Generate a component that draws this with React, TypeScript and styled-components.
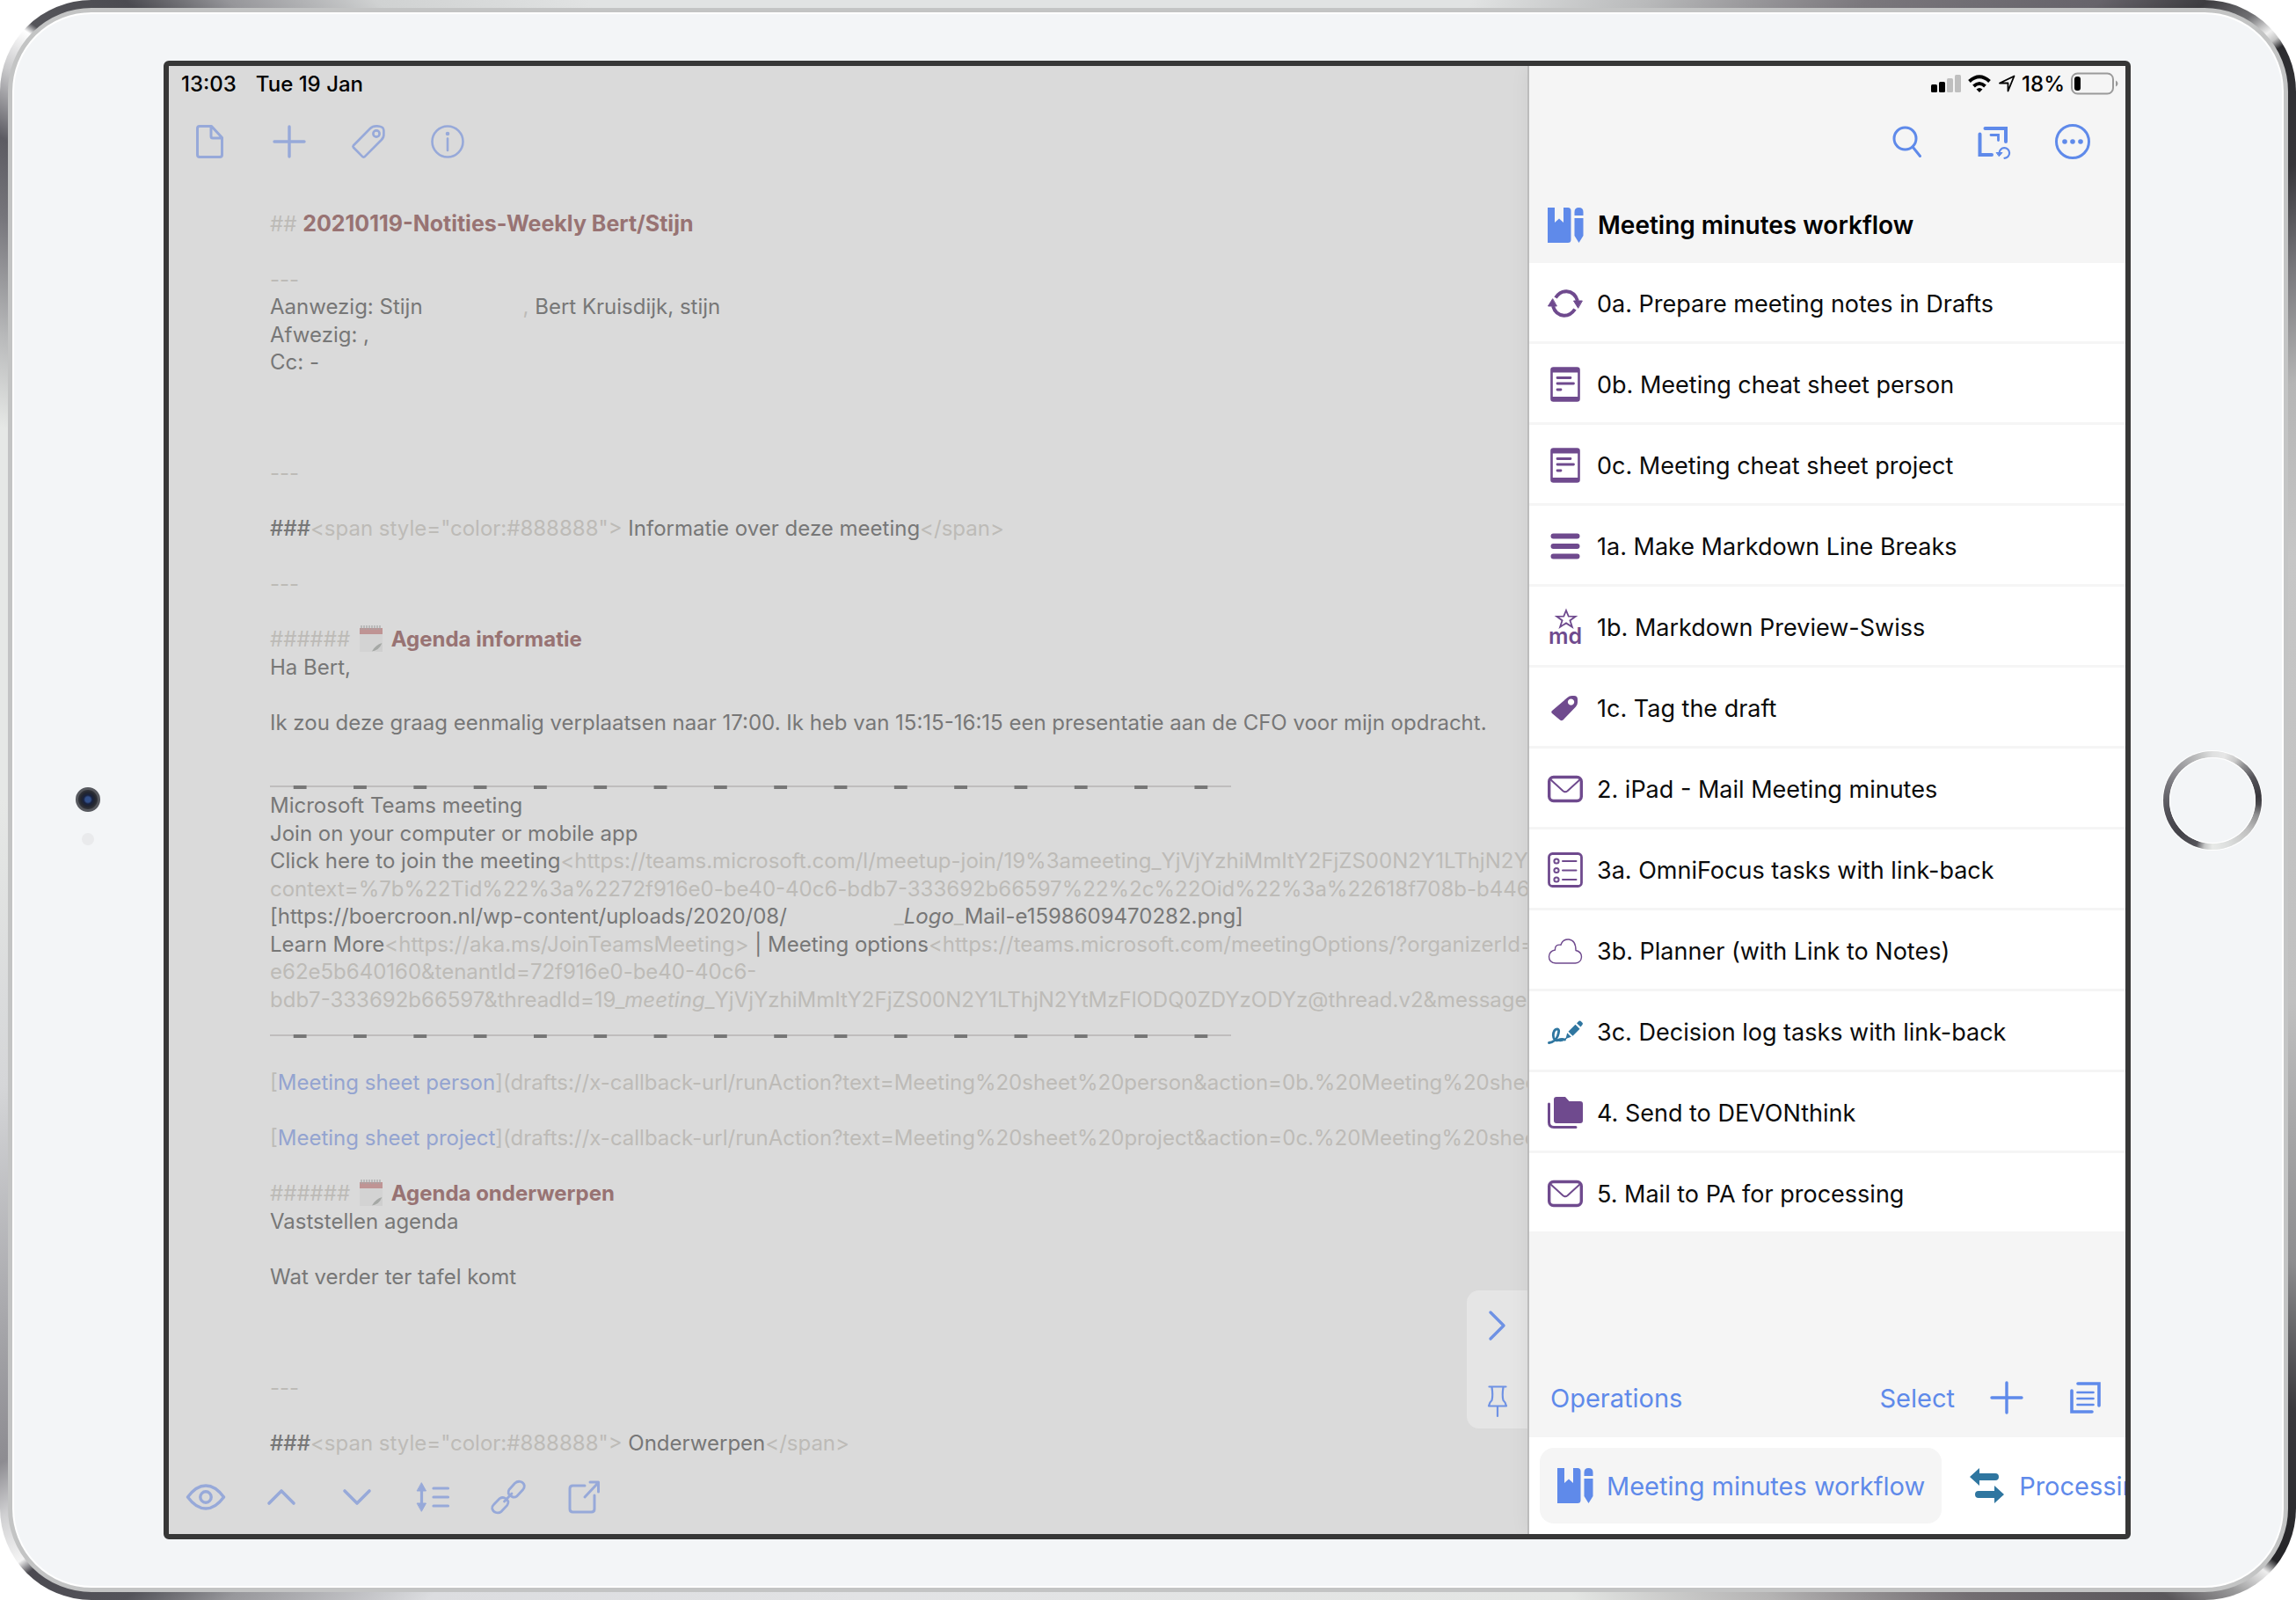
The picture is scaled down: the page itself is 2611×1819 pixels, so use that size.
import React from "react";
import styled, { createGlobalStyle } from "styled-components";

const c = {
  blue: "#5f8aea",
  dimBlue: "#97a9d9",
  purple: "#6f4a8e",
  teal: "#2f76a0",
  ink: "#0b0b0b",
  dimInk: "#777777",
  faint: "#bdbbb7",
  heading: "#987373",
  editor: "#dadada",
  panel: "#f5f5f5",
};

const GlobalStyle = createGlobalStyle`
  *, *::before, *::after { box-sizing: border-box; }
  body {
    margin: 0;
    background: #ffffff;
    font-family: Inter, "Noto Sans", "Liberation Sans", sans-serif;
  }
  button { font: inherit; color: inherit; background: none; border: 0; padding: 0; margin: 0; cursor: pointer; }
  h1, h2, ul { margin: 0; padding: 0; font: inherit; list-style: none; }
  svg { display: block; flex: none; overflow: visible; }
`;

/* ---------- device shell ---------- */

const Device = styled.main`
  min-height: 100vh;
  padding: 9px;
  display: flex;
  border-radius: 104px;
  background: conic-gradient(
    #e1e3e3 0deg, #e1e3e3 22deg, #b9babb 32deg, #7a777c 42deg, #66636a 50deg, #3d3c40 53deg,
    #707073 54.6deg, #f0f0f0 55.6deg, #c4c4c4 56deg, #2c2c2f 56.4deg, #37363a 61deg, #77767a 65deg,
    #b5b5b5 70deg, #c6c6c6 78deg, #c0c0c0 100deg, #8d8d8f 112deg, #3a393d 118deg, #242427 124deg,
    #ededed 124.6deg, #9a9a9b 126deg, #59565a 128deg, #726d71 134deg, #b4b3b3 142deg, #e4e6e4 152deg,
    #e2e3e5 200deg, #dcdde0 222deg, #97979b 229deg, #54545a 232deg, #4b4a51 235.4deg, #f4f4f4 236deg,
    #d0d0d2 238deg, #8d8c91 240deg, #a9a9ad 246deg, #d5d6d8 256deg, #e6e8e6 270deg, #e6e8e6 288deg,
    #b9babb 292deg, #76757b 297deg, #5c5b62 300deg, #c8c8ca 302.6deg, #ffffff 304.4deg, #55555a 304.8deg,
    #4b4b51 308deg, #96969a 311deg, #d0d2d2 316deg, #e1e3e3 325deg, #e1e3e3 360deg
  );
`;

const Face = styled.div`
  flex: 1;
  min-width: 0;
  display: grid;
  grid-template-columns: 172px minmax(0, 1fr) 174px;
  padding: 55px 0;
  border: 5px solid #c3c4c4;
  border-radius: 95px;
  background: #f3f5f7;
  box-shadow: inset 0 0 0 2px #ffffff;
`;

const SensorColumn = styled.div`
  display: flex;
  flex-direction: column;
  align-items: center;
  justify-content: center;
  gap: 24px;
  padding-top: 36px;
`;

const Camera = styled.div`
  width: 28px;
  height: 28px;
  border-radius: 50%;
  border: 3px solid #57595f;
  background: radial-gradient(circle, #33508a 0 3px, #182240 5px, #23262f 8px, #34363c 11px);
`;

const LightSensor = styled.div`
  width: 14px;
  height: 14px;
  border-radius: 50%;
  background: #e9eaec;
`;

const HomeColumn = styled.div`
  display: flex;
  align-items: center;
  justify-content: center;
  padding-left: 12px;
`;

const HomeButton = styled.button`
  width: 112px;
  height: 112px;
  padding: 7px;
  border-radius: 50%;
  box-shadow: 0 0 0 1px #ffffff;
  background: conic-gradient(
    #dfe0e0 0deg, #e6e6e6 15deg, #c9c9c9 30deg, #8f8f91 42deg, #55545a 60deg, #38373c 85deg,
    #4a494e 95deg, #8f8f91 108deg, #c0c0c0 130deg, #dcdedd 160deg, #e8eae8 180deg, #c4c5c5 190deg,
    #55545a 200deg, #434248 225deg, #55545b 260deg, #77767c 290deg, #a0a0a3 320deg, #c4c5c5 345deg, #dfe0e0 360deg
  );
  &::before {
    content: "";
    display: block;
    height: 100%;
    border-radius: 50%;
    background: #f3f5f7;
    box-shadow: inset 0 0 0 1px #ffffff;
  }
`;

const Screen = styled.div`
  display: flex;
  min-width: 0;
  border: 6px solid #373737;
  border-radius: 6px;
  overflow: hidden;
  background: ${c.editor};
`;

/* ---------- shared bars ---------- */

const StatusBar = styled.div<{ $end?: boolean }>`
  display: flex;
  align-items: center;
  justify-content: ${(p) => (p.$end ? "flex-end" : "flex-start")};
  gap: ${(p) => (p.$end ? "7px" : "22px")};
  height: 40px;
  padding: 0 ${(p) => (p.$end ? "8px" : "14px")};
  font-size: 24px;
  font-weight: 500;
  color: #000000;
`;

const IconButton = styled.button<{ $w: number }>`
  width: ${(p) => p.$w}px;
  height: 60px;
  display: flex;
  align-items: center;
  justify-content: center;
`;

/* ---------- editor ---------- */

const Editor = styled.section`
  position: relative;
  flex: 1;
  min-width: 0;
  display: flex;
  flex-direction: column;
  overflow: hidden;
`;

const TopTools = styled.nav`
  display: flex;
  align-items: center;
  height: 91px;
  padding-left: 2px;
  color: ${c.dimBlue};
`;

const BottomTools = styled(TopTools)`
  height: 88px;
  gap: 6px;
  padding-top: 4px;
`;

const Lines = styled.div`
  flex: 1;
  display: grid;
  grid-template-rows: repeat(45, minmax(31px, 1fr));
  padding: 33px 0 0 115px;
  font-size: 24px;
  line-height: 31px;
  white-space: pre;
  color: ${c.dimInk};
`;

const Line = styled.div`
  min-height: 0;
  height: 31px;
`;

const Heading = styled.h2<{ $large?: boolean }>`
  display: inline;
  font-size: ${(p) => (p.$large ? "25px" : "24px")};
  font-weight: 700;
  color: ${c.heading};
`;

const Faint = styled.span`
  color: ${c.faint};
`;

const Hash = styled.span`
  font-weight: 500;
`;

const Blank = styled.span<{ $w: number }>`
  display: inline-block;
  width: ${(p) => p.$w}px;
`;

const NoteLink = styled.a`
  color: #94a4d0;
  text-decoration: none;
`;

const Notepad = styled.svg`
  && { display: inline-block; }
  margin: 0 4px;
  vertical-align: -6px;
`;

const Rule = styled.div`
  width: 1093px;
  height: 4px;
  margin-top: 24px;
  background:
    linear-gradient(90deg, transparent 27px, #777777 27px 42px, transparent 42px) 0 0 / calc(100% / 16) 4px repeat-x,
    linear-gradient(#bfbdbd, #bfbdbd) 0 0 / 100% 2px no-repeat;
`;

const SideTab = styled.div`
  position: absolute;
  right: 0;
  bottom: 120px;
  width: 69px;
  height: 157px;
  display: flex;
  flex-direction: column;
  align-items: center;
  justify-content: space-between;
  padding: 10px 0 1px;
  border-radius: 14px 0 0 14px;
  background: #e5e5e5;
  color: #6f92e4;
`;

/* ---------- action panel ---------- */

const Panel = styled.aside`
  width: 680px;
  flex: none;
  display: flex;
  flex-direction: column;
  border-left: 2px solid #bcbcbc;
  background: ${c.panel};
  box-shadow: 0 0 20px rgba(0, 0, 0, 0.06);
  z-index: 1;
`;

const PanelTools = styled.nav`
  display: flex;
  align-items: center;
  justify-content: flex-end;
  height: 91px;
  padding-right: 20px;
  color: ${c.blue};
`;

const PanelTitle = styled.h1`
  display: flex;
  align-items: center;
  gap: 16px;
  height: 93px;
  padding: 6px 20px 0;
  font-size: 28px;
  font-weight: 600;
  color: #000000;
  svg { color: ${c.blue}; }
`;

const ActionList = styled.ul`
  flex: 1;
`;

const ActionItem = styled.li`
  height: 92px;
  background: #ffffff;
  border-bottom: 3px solid ${c.panel};
`;

const ActionButton = styled.button<{ $tint: string }>`
  width: 100%;
  height: 100%;
  display: flex;
  align-items: center;
  gap: 16px;
  padding: 3px 21px 0;
  font-size: 27px;
  text-align: left;
  color: ${c.ink};
  svg { color: ${(p) => p.$tint}; }
`;

const OperationsBar = styled.div`
  display: flex;
  align-items: center;
  height: 90px;
  padding: 0 14px 0 24px;
  font-size: 29px;
  color: ${c.blue};
`;

const Spacer = styled.span`
  flex: 1;
`;

const GroupTabs = styled.div`
  display: flex;
  align-items: center;
  height: 110px;
  padding: 0 12px;
  gap: 12px;
  overflow: hidden;
  background: #ffffff;
`;

const GroupTab = styled.button<{ $active?: boolean; $tint?: string }>`
  flex: none;
  display: flex;
  align-items: center;
  gap: 15px;
  height: 86px;
  padding: 0 19px;
  border-radius: 16px;
  font-size: 29px;
  white-space: nowrap;
  color: ${c.blue};
  background: ${(p) => (p.$active ? c.panel : "transparent")};
  svg { color: ${(p) => p.$tint || c.blue}; }
`;

/* ---------- icons ---------- */

type IconProps = { w?: number; h?: number; sw?: number; fill?: boolean; children: React.ReactNode };

const Icon = ({ w = 40, h = 40, sw = 3, fill, children }: IconProps) => (
  <svg
    width={w}
    height={h}
    viewBox={`0 0 ${w} ${h}`}
    fill={fill ? "currentColor" : "none"}
    stroke={fill ? "none" : "currentColor"}
    strokeWidth={sw}
    strokeLinecap="round"
    strokeLinejoin="round"
    aria-hidden="true"
  >
    {children}
  </svg>
);

const DocIcon = () => (
  <Icon>
    <path d="M8 2.500h13.500l12 13v19.500q0 2.500-2.500 2.500h-23q-2.500 0-2.500-2.500v-30q0-2.500 2.500-2.500zM21 3v11q0 2 2 2h10" />
  </Icon>
);
const PlusIcon = () => (
  <Icon sw={3.4}>
    <path d="M20 3v34M3 20h34" />
  </Icon>
);
const TagIcon = () => (
  <Icon sw={2.6}>
    <path d="M2.800 24.500L22 5q3-3 8-2.600l3 .4q4 .6 4.400 4.600v4q.4 3.600-2.600 6.600L15.500 37.300q-1 .8-2 0L2.800 26.500q-.8-1 0-2z" />
    <circle cx="29" cy="11" r="3.600" />
  </Icon>
);
const InfoIcon = () => (
  <Icon sw={2.6}>
    <circle cx="20" cy="20" r="17.500" />
    <path d="M20 16.500v13.500" />
    <circle cx="20" cy="11" r="1" fill="currentColor" />
  </Icon>
);
const EyeIcon = () => (
  <Icon w={46} sw={3.4}>
    <path d="M2.500 20Q12 7 23 7t20.500 13Q34 33 23 33T2.500 20z" />
    <circle cx="23" cy="20" r="6.200" />
  </Icon>
);
const UpIcon = () => (
  <Icon sw={3.6}>
    <path d="M6 27L20 13l14 14" />
  </Icon>
);
const DownIcon = () => (
  <Icon sw={3.6}>
    <path d="M6 13l14 14 14-14" />
  </Icon>
);
const SpacingIcon = () => (
  <Icon sw={3.2}>
    <path d="M21 10h16.500M21 20h16.500M21 30h16.500M7.500 8v24" />
    <path d="M7.500 4l5 9h-10zM7.500 36l5-9h-10z" fill="currentColor" strokeWidth="1" />
  </Icon>
);
const ChainIcon = () => (
  <Icon sw={2.8}>
    <path d="M21 11.500l6.500-7.200q3-2.800 6.600-1.800t4.200 4.500q.2 2.500-1.800 4.800L30 18.800q-2.800 2-5.600.8t-4.200-3.600q-.6-2.400.8-4.500z" />
    <path d="M3.500 28.500L10.300 21.600q2.800-1.800 5.600-.6t4 3.800q.4 2.400-1.200 4.600L12.200 36.300q-3 2.400-6.400 1.200T1.700 33q-.4-2.500 1.800-4.500z" />
    <path d="M15.500 25l8.500-9" />
  </Icon>
);
const ShareIcon = () => (
  <Icon>
    <path d="M21 7H7.500Q4 7 4 10.500v23Q4 37 7.500 37h21q3.500 0 3.500-3.500V18" />
    <path d="M21 20L36 4M27 3h9.500v11" />
  </Icon>
);
const SearchIcon = () => (
  <Icon>
    <circle cx="17.500" cy="16.500" r="12.500" />
    <path d="M26.500 26.500L34.500 36.500" />
  </Icon>
);
const RestoreIcon = () => (
  <Icon sw={4}>
    <path d="M9.500 5h23.500v15M3.500 11.500v23.500h13.500" strokeLinejoin="miter" />
    <path d="M16 12.500h8.500v6" strokeLinejoin="miter" strokeWidth="2.800" />
    <path d="M25.500 33a5.800 5.800 0 1 1 6 5.800" strokeWidth="2.200" />
    <path d="M22.500 32.500h6.500l-3.500 4z" fill="currentColor" strokeWidth="1" />
  </Icon>
);
const MoreIcon = () => (
  <Icon w={42} h={42}>
    <circle cx="21" cy="21" r="18.500" />
    <g fill="currentColor" stroke="none">
      <circle cx="12" cy="21" r="2.800" />
      <circle cx="21" cy="21" r="2.800" />
      <circle cx="30" cy="21" r="2.800" />
    </g>
  </Icon>
);
const NotebookIcon = () => (
  <Icon w={42} h={42} fill>
    <path d="M1 1h8v17l5-4.500L19 18V1h5q3.500 0 3.500 3.500v33q0 3.500-3.500 3.500H1z" />
    <path d="M31.500 10V6q0-5 5-5t5 5v4zM31.500 13h10v20l-5 8-5-8z" />
  </Icon>
);
const CycleIcon = () => (
  <Icon sw={4}>
    <path d="M9 13.500Q14 6 21.500 6.200 31 7 34 17" strokeLinecap="butt" />
    <path d="M31 26.500Q26 34 18.500 33.800 9 33 6 23" strokeLinecap="butt" />
    <path d="M34.500 25l-5-8h9.500zM5.500 15l-5 8h9.500z" fill="currentColor" strokeWidth="1" />
  </Icon>
);
const SheetIcon = () => (
  <Icon sw={2.6}>
    <rect x="4.500" y="1.500" width="31" height="37" rx="2" />
    <path d="M4.500 4h31M4.500 36.500h31" strokeWidth="5" strokeLinecap="butt" />
    <path d="M11 12.500h15M11 19h18.500M11 26h4" strokeWidth="2.800" />
  </Icon>
);
const BarsIcon = () => (
  <Icon sw={6}>
    <path d="M6.500 8.500h27M6.500 20h27M6.500 31.500h27" />
  </Icon>
);
const MdIcon = () => (
  <Icon sw={1.8}>
    <path d="M21 1l2.700 6.600 8 .2-6.300 4.600 2.500 7.400-6.900-4.400-6.900 4.400 2.500-7.400L10.300 7.800l8-.2z" strokeLinejoin="miter" />
    <text
      x="20"
      y="39"
      textAnchor="middle"
      fontSize="25"
      fontWeight="600"
      fontFamily="Inter, sans-serif"
      fill="currentColor"
      stroke="none"
    >
      md
    </text>
  </Icon>
);
const SolidTagIcon = () => (
  <Icon fill>
    <path
      fillRule="evenodd"
      d="M5 23L22.500 8q2-2 5-2h2.500q4 0 4 4v3.500q0 3-2 5L17.500 33.500q-1.800 1.500-3.500 0L5 26q-1.500-1.500 0-3zM26.500 9.500a3.600 3.600 0 1 0 .1 0z"
    />
  </Icon>
);
const MailIcon = () => (
  <Icon sw={3.4}>
    <rect x="1.700" y="6.500" width="36.600" height="27" rx="5" />
    <path d="M3 9l14.500 13.200q2.500 2 5 0L37 9" strokeWidth="2" />
  </Icon>
);
const TasksIcon = () => (
  <Icon sw={2.8}>
    <rect x="1.500" y="1.500" width="37" height="37" rx="4" />
    <g strokeWidth="2">
      <circle cx="10" cy="10" r="2.600" />
      <circle cx="10" cy="20.500" r="2.600" />
      <circle cx="10" cy="31" r="2.600" />
      <path d="M17 10h15.500M17 20.500h15.500M17 31h15.500" />
    </g>
  </Icon>
);
const CloudIcon = () => (
  <Icon sw={1.4}>
    <path d="M9 34Q1.500 33.500 1.500 26.500 2 20 8.500 19 8 12.500 15 13.200 17 6.500 24 7q8 .8 8 12.500 6.500 1.500 6.500 7.500-.5 6.500-7 7z" />
  </Icon>
);
const ScribbleIcon = () => (
  <Icon sw={2.8}>
    <path d="M1.500 32.500q7-1 9.800-7.500 3-8-.6-8.200-4.200.6-4.400 7.200.4 7 5.200 5.600 4.500-2 8-.6" />
    <path d="M12 30q4 1.500 9-2.500" strokeWidth="1.600" />
    <path d="M20.500 28l1.700-6.800 4.600 4.600z" fill="currentColor" stroke="none" />
    <path d="M23.500 19.800l8-8 5 5-8 8z" fill="currentColor" stroke="none" />
    <path d="M33 10.300l2.500-2.500q1-.8 2 0l2 2q1 1 0 2.200l-2 2.500z" fill="currentColor" stroke="none" />
  </Icon>
);
const FoldersIcon = () => (
  <Icon sw={3}>
    <path
      d="M7 5q0-3 3-3h10l4.500 5H37q3 0 3 3v19q0 3-3 3H10q-3 0-3-3z"
      fill="currentColor"
      stroke="none"
    />
    <path d="M1.500 10v21q0 5.500 5.500 5.500h25" />
  </Icon>
);
const ChevronRightIcon = () => (
  <Icon sw={3.4}>
    <path d="M12 5l15 15-15 15" />
  </Icon>
);
const PinIcon = () => (
  <Icon sw={2.2}>
    <path d="M10.500 3.500h19M13.500 4q1.500 9.500 0 15-3 2.500-3.500 6.500h20q-.5-4-3.500-6.500-1.500-5.500 0-15M20 26v11" />
  </Icon>
);
const StackIcon = () => (
  <Icon sw={3.6}>
    <path d="M11 4h24v25M4 12v24h23" strokeLinejoin="miter" />
    <path d="M10.500 14h18M10.500 21h18M10.500 28h18" strokeWidth="2.600" />
  </Icon>
);
const SwapIcon = () => (
  <Icon w={42} h={42} fill>
    <path d="M1 11L12 1v6h18q4 0 4 4t-4 4H12v6zM40 31L29 21v6H11q-4 0-4 4t4 4h18v6z" />
  </Icon>
);
const SignalIcon = () => (
  <Icon w={34} h={22} fill>
    <rect x="0" y="12" width="7" height="9" rx="1.500" />
    <rect x="9" y="9" width="7" height="12" rx="1.500" />
    <rect x="18" y="5" width="7" height="16" rx="1.500" opacity=".22" />
    <rect x="27" y="1" width="7" height="20" rx="1.500" opacity=".22" />
  </Icon>
);
const WifiIcon = () => (
  <Icon w={28} h={22} sw={4}>
    <path d="M2.500 8.500q11.500-10.500 23 0M7.500 14q6.500-6 13 0" strokeLinecap="butt" />
    <path d="M10.500 17.500q3.500-3 7 0L14 21z" fill="currentColor" stroke="none" />
  </Icon>
);
const LocationIcon = () => (
  <Icon w={20} h={20} sw={1.8}>
    <path d="M18.500 1.500L11.500 18.500V9.500H2z" />
  </Icon>
);
const BatteryIcon = () => (
  <Icon w={54} h={26} sw={2}>
    <rect x="1" y="1.500" width="47" height="23" rx="6.500" stroke="#9a9a9a" />
    <rect x="4" y="5" width="7" height="16" rx="3" fill="#000000" stroke="none" />
    <path d="M51 9.500q2.500 1 2.500 3.500t-2.500 3.500z" fill="#9a9a9a" stroke="none" />
  </Icon>
);
const NotepadIcon = () => (
  <Notepad width="26" height="30" viewBox="0 0 26 30" aria-hidden="true">
    <path d="M0 4h26v16l-8 10H0z" fill="#d3d3d3" />
    <path d="M26 20l-8 10h8z" fill="#cfcfcf" />
    <path d="M25.500 20q-7 1.500-11.500 9.500 8-1 11.500-9.500z" fill="#a5a8a5" />
    <path d="M0 3h26v7H0z" fill="#bf9494" />
    <path d="M2 0v5M5 0v5M8 0v5M11 0v5M14 0v5M17 0v5M20 0v5M23 0v5" stroke="#a6a6a6" strokeWidth="1.200" />
  </Notepad>
);

/* ---------- data ---------- */

const topTools = [
  ["New draft", <DocIcon />],
  ["Add", <PlusIcon />],
  ["Tags", <TagIcon />],
  ["Info", <InfoIcon />],
] as const;

const bottomTools = [
  ["Preview", <EyeIcon />],
  ["Previous", <UpIcon />],
  ["Next", <DownIcon />],
  ["Line spacing", <SpacingIcon />],
  ["Link mode", <ChainIcon />],
  ["Open in", <ShareIcon />],
] as const;

const actions: { label: string; icon: React.ReactNode; tint?: string }[] = [
  { label: "0a. Prepare meeting notes in Drafts", icon: <CycleIcon /> },
  { label: "0b. Meeting cheat sheet person", icon: <SheetIcon /> },
  { label: "0c. Meeting cheat sheet project", icon: <SheetIcon /> },
  { label: "1a. Make Markdown Line Breaks", icon: <BarsIcon /> },
  { label: "1b. Markdown Preview-Swiss", icon: <MdIcon /> },
  { label: "1c. Tag the draft", icon: <SolidTagIcon /> },
  { label: "2. iPad - Mail Meeting minutes", icon: <MailIcon /> },
  { label: "3a. OmniFocus tasks with link-back", icon: <TasksIcon /> },
  { label: "3b. Planner (with Link to Notes)", icon: <CloudIcon /> },
  { label: "3c. Decision log tasks with link-back", icon: <ScribbleIcon />, tint: c.teal },
  { label: "4. Send to DEVONthink", icon: <FoldersIcon /> },
  { label: "5. Mail to PA for processing", icon: <MailIcon /> },
];

const divider = <Faint>---</Faint>;
const spanOpen = <Faint>{'<span style="color:#888888">'}</Faint>;
const spanClose = <Faint>{"</span>"}</Faint>;

const draft: React.ReactNode[] = [
  <><Faint>## </Faint><Heading $large>20210119-Notities-Weekly Bert/Stijn</Heading></>,
  null,
  divider,
  <>Aanwezig: Stijn<Blank $w={114} /><Faint>,</Faint> Bert Kruisdijk, stijn</>,
  "Afwezig: ,",
  "Cc: -",
  null,
  null,
  null,
  divider,
  null,
  <><Hash>###</Hash>{spanOpen} Informatie over deze meeting{spanClose}</>,
  null,
  divider,
  null,
  <><Faint>###### </Faint><NotepadIcon /><Heading> Agenda informatie</Heading></>,
  "Ha Bert,",
  null,
  "Ik zou deze graag eenmalig verplaatsen naar 17:00. Ik heb van 15:15-16:15 een presentatie aan de CFO voor mijn opdracht.",
  null,
  <Rule />,
  "Microsoft Teams meeting",
  "Join on your computer or mobile app",
  <>Click here to join the meeting<Faint>{"<https://teams.microsoft.com/l/meetup-join/19%3ameeting_YjVjYzhiMmItY2FjZS00N2Y1LThjN2Yt"}</Faint></>,
  <Faint>context=%7b%22Tid%22%3a%2272f916e0-be40-40c6-bdb7-333692b66597%22%2c%22Oid%22%3a%22618f708b-b446-</Faint>,
  <>[https://boercroon.nl/wp-content/uploads/2020/08/<Blank $w={122} /><Faint>_</Faint><em>Logo</em><Faint>_</Faint>Mail-e1598609470282.png]</>,
  <>Learn More<Faint>{"<https://aka.ms/JoinTeamsMeeting>"}</Faint> | Meeting options<Faint>{"<https://teams.microsoft.com/meetingOptions/?organizerId=6"}</Faint></>,
  <Faint>{"e62e5b640160&tenantId=72f916e0-be40-40c6-"}</Faint>,
  <Faint>{"bdb7-333692b66597&threadId=19_"}<em>meeting</em>{"_YjVjYzhiMmItY2FjZS00N2Y1LThjN2YtMzFlODQ0ZDYzODYz@thread.v2&message"}</Faint>,
  <Rule />,
  null,
  <><Faint>[</Faint><NoteLink href="#person">Meeting sheet person</NoteLink><Faint>{"](drafts://x-callback-url/runAction?text=Meeting%20sheet%20person&action=0b.%20Meeting%20shee"}</Faint></>,
  null,
  <><Faint>[</Faint><NoteLink href="#project">Meeting sheet project</NoteLink><Faint>{"](drafts://x-callback-url/runAction?text=Meeting%20sheet%20project&action=0c.%20Meeting%20shee"}</Faint></>,
  null,
  <><Faint>###### </Faint><NotepadIcon /><Heading> Agenda onderwerpen</Heading></>,
  "Vaststellen agenda",
  null,
  "Wat verder ter tafel komt",
  null,
  null,
  null,
  divider,
  null,
  <><Hash>###</Hash>{spanOpen} Onderwerpen{spanClose}</>,
];

export default function App() {
  return (
    <>
      <GlobalStyle />
      <Device>
        <Face>
          <SensorColumn>
            <Camera />
            <LightSensor />
          </SensorColumn>
          <Screen>
            <Editor>
              <StatusBar>
                <span>13:03</span>
                <span>Tue 19 Jan</span>
              </StatusBar>
              <TopTools>
                {topTools.map(([label, icon]) => (
                  <IconButton key={label} $w={90} aria-label={label}>{icon}</IconButton>
                ))}
              </TopTools>
              <Lines>
                {draft.map((line, i) => (
                  <Line key={i}>{line}</Line>
                ))}
              </Lines>
              <BottomTools>
                {bottomTools.map(([label, icon]) => (
                  <IconButton key={label} $w={80} aria-label={label}>{icon}</IconButton>
                ))}
              </BottomTools>
              <SideTab>
                <IconButton $w={60} aria-label="Hide actions"><ChevronRightIcon /></IconButton>
                <IconButton $w={60} aria-label="Pin actions"><PinIcon /></IconButton>
              </SideTab>
            </Editor>
            <Panel>
              <StatusBar $end>
                <SignalIcon />
                <WifiIcon />
                <LocationIcon />
                <span>18%</span>
                <BatteryIcon />
              </StatusBar>
              <PanelTools>
                <IconButton $w={100} aria-label="Search"><SearchIcon /></IconButton>
                <IconButton $w={98} aria-label="Restore"><RestoreIcon /></IconButton>
                <IconButton $w={80} aria-label="More"><MoreIcon /></IconButton>
              </PanelTools>
              <PanelTitle>
                <NotebookIcon />
                Meeting minutes workflow
              </PanelTitle>
              <ActionList>
                {actions.map((a) => (
                  <ActionItem key={a.label}>
                    <ActionButton $tint={a.tint || c.purple}>
                      {a.icon}
                      {a.label}
                    </ActionButton>
                  </ActionItem>
                ))}
              </ActionList>
              <OperationsBar>
                <button>Operations</button>
                <Spacer />
                <button>Select</button>
                <IconButton $w={118} aria-label="Add action"><PlusIcon /></IconButton>
                <IconButton $w={62} aria-label="Action groups"><StackIcon /></IconButton>
              </OperationsBar>
              <GroupTabs>
                <GroupTab $active>
                  <NotebookIcon />
                  Meeting minutes workflow
                </GroupTab>
                <GroupTab $tint={c.teal}>
                  <SwapIcon />
                  Processing
                </GroupTab>
              </GroupTabs>
            </Panel>
          </Screen>
          <HomeColumn>
            <HomeButton aria-label="Home" />
          </HomeColumn>
        </Face>
      </Device>
    </>
  );
}
